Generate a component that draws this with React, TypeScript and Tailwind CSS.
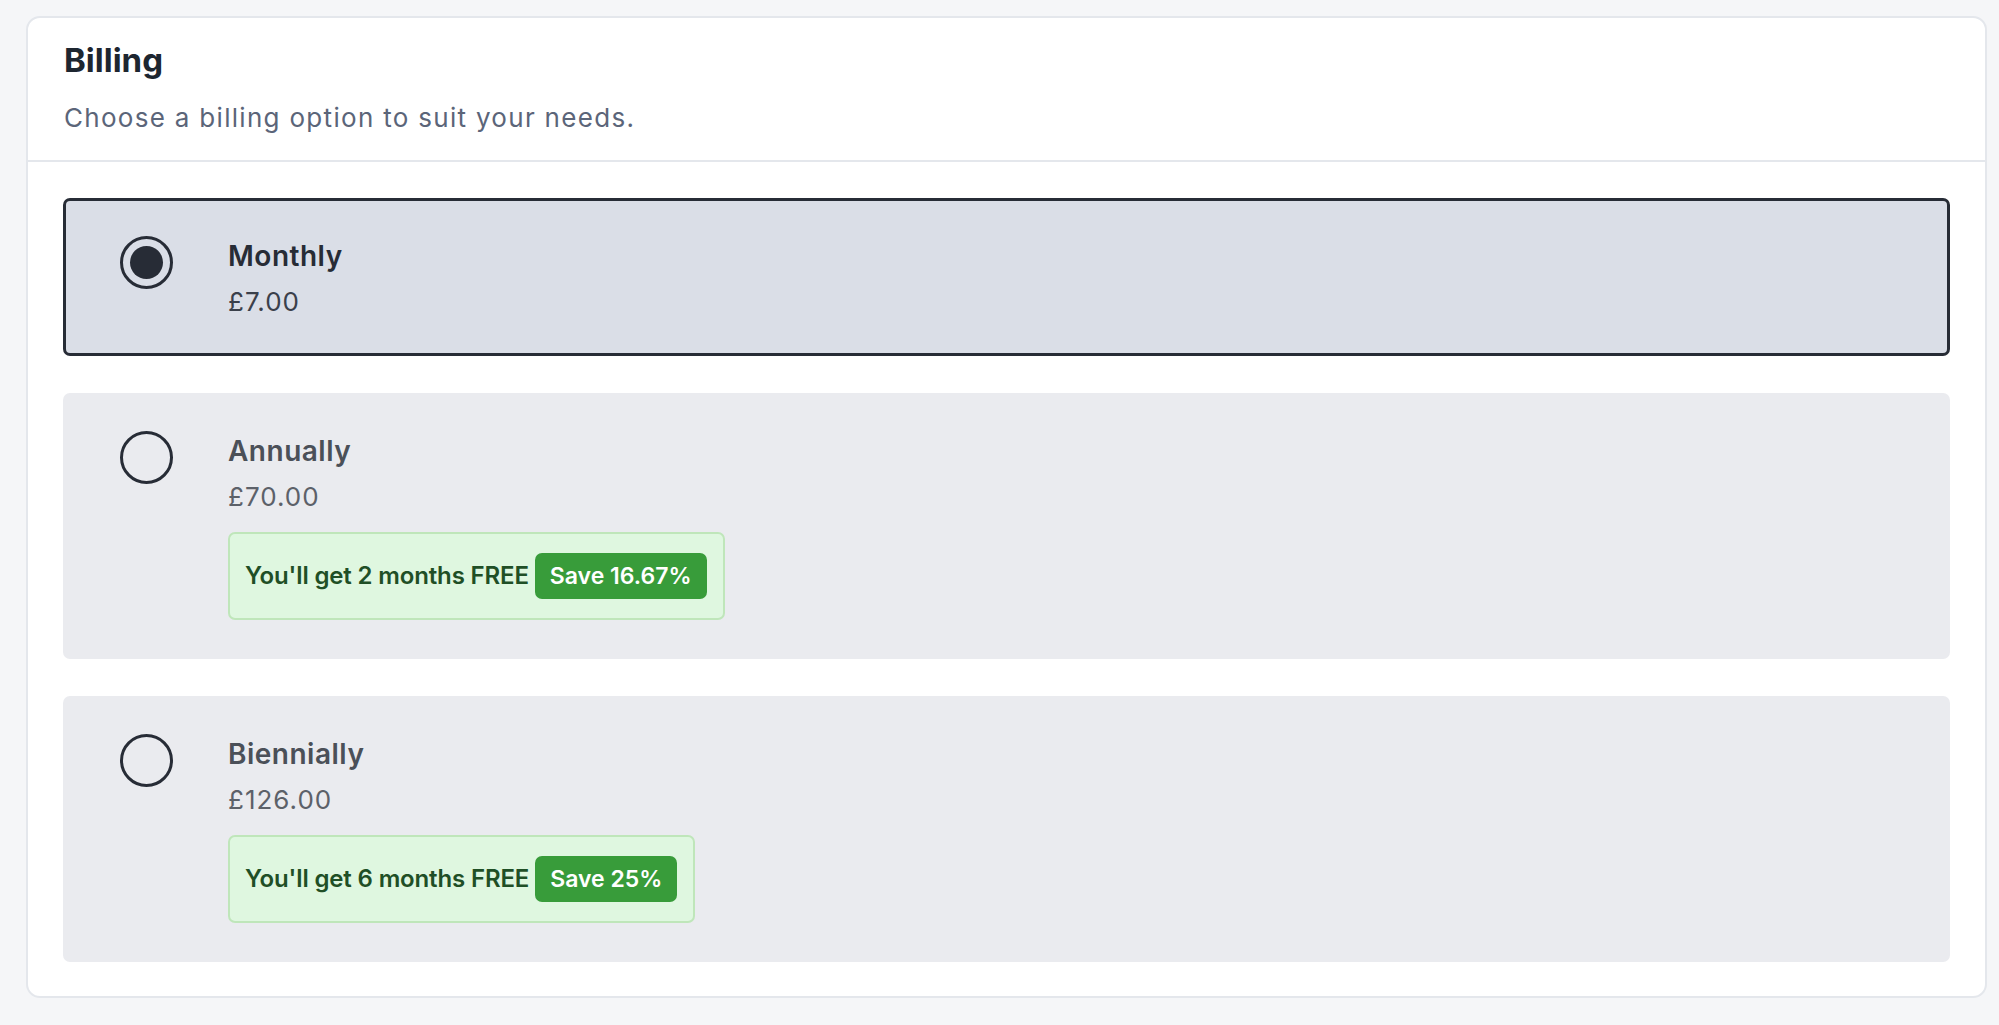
import { useState } from "react"

type Plan = {
  id: string
  name: string
  price: string
  free?: string
  save?: string
}

const plans: Plan[] = [
  { id: "monthly", name: "Monthly", price: "£7.00" },
  {
    id: "annually",
    name: "Annually",
    price: "£70.00",
    free: "You'll get 2 months FREE",
    save: "Save 16.67%",
  },
  {
    id: "biennially",
    name: "Biennially",
    price: "£126.00",
    free: "You'll get 6 months FREE",
    save: "Save 25%",
  },
]

function Radio({ checked }: { checked: boolean }) {
  return (
    <span className="mt-[2px] flex h-[53px] w-[53px] shrink-0 items-center justify-center rounded-full border-[3px] border-[#272c36]">
      {checked && <span className="h-[33px] w-[33px] rounded-full bg-[#272c36]" />}
    </span>
  )
}

export default function App() {
  const [selected, setSelected] = useState("monthly")

  return (
    <div className="min-h-screen bg-[#f5f6f8] pt-[16px] pb-[27px] pl-[26px] pr-[12px] font-['Inter',sans-serif]">
      <div className="rounded-[14px] border-2 border-[#e4e7ec] bg-white">
        <div className="flex flex-col gap-[20px] border-b-2 border-[#e4e7ec] px-[36px] pt-[22px] pb-[24px]">
          <h2 className="text-[33px] font-bold leading-[40px] text-[#1d2630]">Billing</h2>
          <p className="text-[26px] leading-[36px] tracking-[1.3px] text-[#5b6579]">
            Choose a billing option to suit your needs.
          </p>
        </div>

        <div className="flex flex-col gap-[37px] px-[35px] pt-[36px] pb-[34px]">
          {plans.map((plan) => {
            const checked = selected === plan.id
            return (
              <button
                key={plan.id}
                type="button"
                onClick={() => setSelected(plan.id)}
                className={
                  checked
                    ? "flex items-start gap-[55px] rounded-[7px] border-[3px] border-[#272c36] bg-[#dadee7] pl-[54px] pt-[33px] pb-[33px] text-left"
                    : "flex items-start gap-[55px] rounded-[7px] border-[3px] border-transparent bg-[#eaebef] pl-[54px] pt-[33px] pb-[33px] text-left"
                }
              >
                <Radio checked={checked} />
                <div className="flex flex-col items-start">
                  <span
                    className={
                      checked
                        ? "text-[28px] font-semibold leading-[44px] tracking-[0.5px] text-[#272c36]"
                        : "text-[28px] font-semibold leading-[44px] tracking-[0.5px] text-[#4b5058]"
                    }
                  >
                    {plan.name}
                  </span>
                  <span
                    className={
                      checked
                        ? "mt-[6px] text-[26px] leading-[36px] tracking-[1px] text-[#3a404b]"
                        : "mt-[6px] text-[26px] leading-[36px] tracking-[1px] text-[#5c6169]"
                    }
                  >
                    {plan.price}
                  </span>
                  {plan.free && (
                    <div className="mt-[17px] mb-[3px] flex items-center gap-[6px] rounded-[7px] border-2 border-[#bfe6ba] bg-[#dff7e0] py-[19px] pl-[15px] pr-[16px]">
                      <span className="text-[24px] font-semibold leading-[32px] tracking-[-0.15px] text-[#1f4f26]">
                        {plan.free}
                      </span>
                      <span className="rounded-[7px] bg-[#389c3a] px-[15px] py-[7px] text-[23px] font-semibold leading-[32px] text-white">
                        {plan.save}
                      </span>
                    </div>
                  )}
                </div>
              </button>
            )
          })}
        </div>
      </div>
    </div>
  )
}
